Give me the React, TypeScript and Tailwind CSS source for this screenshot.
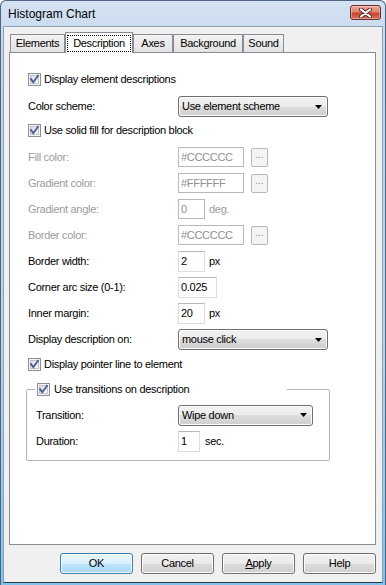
import React from "react";

const FONT = { fontFamily: '"Liberation Sans", Arial, sans-serif' };

function Check() {
  return (
    <span className="relative inline-flex h-[13px] w-[13px] shrink-0 items-center justify-center border border-[#8e8f8f] bg-[#f6f6f6]">
      <span className="absolute inset-[1px] border border-[#bfc4cb] bg-gradient-to-br from-[#d9dce1] to-[#fbfbfc]" />
      <svg className="relative" width="11" height="11" viewBox="0 0 11 11">
        <path d="M2 5.2 L4.3 8.2 L9 1.8" stroke="#4a5f97" strokeWidth="1.9" fill="none" strokeLinecap="square" />
      </svg>
    </span>
  );
}

function Arrow() {
  return (
    <svg width="7" height="4" viewBox="0 0 7 4" className="shrink-0">
      <path d="M0 0H7L3.5 4Z" fill="#000" />
    </svg>
  );
}

function Select({ value, cls }: { value: string; cls: string }) {
  return (
    <div
      className={`flex h-[21px] items-center rounded-[3px] border border-[#707070] bg-[linear-gradient(#f2f2f2_0%,#ebebeb_50%,#dddddd_50%,#cfcfcf_100%)] pl-[3px] pr-[5px] shadow-[inset_0_0_0_1px_#fbfbfb] ${cls}`}
    >
      <span className="flex-1 text-black">{value}</span>
      <Arrow />
    </div>
  );
}

function TextBox({ value, cls, disabled }: { value: string; cls: string; disabled?: boolean }) {
  return (
    <div
      className={`flex h-[20px] items-center bg-white pl-[2px] ${cls} ${
        disabled ? "border border-[#b9b9b9] text-[#8f8f8f]" : "border border-[#d9dde3] border-t-[#b4b7bd] text-black"
      }`}
    >
      {value}
    </div>
  );
}

function Dots() {
  return (
    <div className="ml-[7px] flex h-[19px] w-[17px] items-end justify-center rounded-[2px] border border-[#b8b8b8] bg-[#f4f4f4] pb-[3px] text-[#9a9a9a]">
      ...
    </div>
  );
}

function Label({ children, dis, w = "w-[150px]" }: { children: React.ReactNode; dis?: boolean; w?: string }) {
  return <span className={`${w} shrink-0 ${dis ? "text-[#9c9c9c]" : "text-black"}`}>{children}</span>;
}

function Btn({ children, def }: { children: React.ReactNode; def?: boolean }) {
  return (
    <div
      className={`flex h-[21px] w-[73px] items-center justify-center rounded-[3px] border ${
        def
          ? "border-[#3c7fb1] bg-[linear-gradient(#eaf6fd_0%,#d9f0fc_50%,#bee6fd_50%,#a7d9f5_100%)] shadow-[inset_0_0_0_1px_#f2fbff]"
          : "border-[#707070] bg-[linear-gradient(#f2f2f2_0%,#ebebeb_50%,#dddddd_50%,#cfcfcf_100%)] shadow-[inset_0_0_0_1px_#fbfbfb]"
      }`}
    >
      {children}
    </div>
  );
}

function Tab({ label, cls }: { label: string; cls: string }) {
  return (
    <div
      className={`flex h-[18px] items-center justify-center border-x border-t border-[#898c95] bg-[linear-gradient(#f3f3f3,#e2e2e2)] ${cls}`}
    >
      {label}
    </div>
  );
}

export default function App() {
  return (
    <div className="h-[585px] w-[386px] overflow-hidden bg-white" style={FONT}>
      <div className="flex h-[585px] flex-col rounded-t-[6px] border-x border-t border-[#4c6583] bg-[linear-gradient(#d4e2f2_0%,#c2d6ed_10%,#b9d2ec_60%,#7fc3ec_100%)] text-[11px] tracking-[-0.3px] text-black">
        {/* Title bar */}
        <div className="flex h-[25px] shrink-0 items-start justify-between pl-[7px] pr-[4px]">
          <span className="mt-[6px] text-[12px] leading-[14px] tracking-normal text-black">Histogram Chart</span>
          <div className="mt-[4px] flex h-[15px] w-[31px] items-center justify-center rounded-[3px] border border-[#6b2a2a] bg-[linear-gradient(#e9a898_0%,#dc8470_45%,#c8452f_55%,#d5705a_100%)] shadow-[inset_0_0_0_1px_rgba(255,255,255,0.35)]">
            <svg width="13" height="10" viewBox="0 0 13 10">
              <path d="M2 1.5 L11 8.5 M11 1.5 L2 8.5" stroke="#5a2a25" strokeWidth="4" strokeLinecap="round" />
              <path d="M2 1.5 L11 8.5 M11 1.5 L2 8.5" stroke="#ffffff" strokeWidth="2.2" strokeLinecap="round" />
            </svg>
          </div>
        </div>

        {/* Client */}
        <div className="mx-[2px] flex flex-1 flex-col border border-[#8aa0b8] border-b-[#2c3846] bg-[#f0f0f0] pt-[5px]">
          {/* Tabs */}
          <div className="ml-[6px] flex h-[20px] items-end">
            <Tab label="Elements" cls="w-[55px]" />
            <div className="relative z-10 -mb-[1px] flex h-[21px] w-[68px] items-start justify-center border-x border-t border-[#898c95] bg-white pt-[2px]">
              <span className="flex h-[17px] w-[64px] items-center justify-center border border-dotted border-black">Description</span>
            </div>
            <Tab label="Axes" cls="w-[40px]" />
            <Tab label="Background" cls="w-[70px]" />
            <Tab label="Sound" cls="w-[41px]" />
          </div>

          {/* Panel */}
          <div className="ml-[5px] flex h-[493px] w-[367px] flex-col border border-[#898c95] bg-white pl-[18px]">
            <div className="mt-[20px] flex h-[13px] items-center gap-[3px]">
              <Check />
              <span>Display element descriptions</span>
            </div>

            <div className="mt-[10px] flex h-[21px] items-center">
              <Label>Color scheme:</Label>
              <Select value="Use element scheme" cls="w-[150px]" />
            </div>

            <div className="mt-[7px] flex h-[13px] items-center gap-[3px]">
              <Check />
              <span>Use solid fill for description block</span>
            </div>

            <div className="mt-[10px] flex h-[20px] items-center">
              <Label dis>Fill color:</Label>
              <TextBox value="#CCCCCC" cls="w-[66px]" disabled />
              <Dots />
            </div>
            <div className="mt-[6px] flex h-[20px] items-center">
              <Label dis>Gradient color:</Label>
              <TextBox value="#FFFFFF" cls="w-[66px]" disabled />
              <Dots />
            </div>
            <div className="mt-[6px] flex h-[20px] items-center">
              <Label dis>Gradient angle:</Label>
              <TextBox value="0" cls="w-[27px]" disabled />
              <span className="ml-[4px] text-[#9c9c9c]">deg.</span>
            </div>
            <div className="mt-[6px] flex h-[20px] items-center">
              <Label dis>Border color:</Label>
              <TextBox value="#CCCCCC" cls="w-[66px]" disabled />
              <Dots />
            </div>
            <div className="mt-[6px] flex h-[21px] items-center">
              <Label>Border width:</Label>
              <TextBox value="2" cls="w-[27px] h-[21px]" />
              <span className="ml-[4px]">px</span>
            </div>
            <div className="mt-[5px] flex h-[21px] items-center">
              <Label>Corner arc size (0-1):</Label>
              <TextBox value="0.025" cls="w-[39px] h-[21px]" />
            </div>
            <div className="mt-[5px] flex h-[21px] items-center">
              <Label>Inner margin:</Label>
              <TextBox value="20" cls="w-[27px] h-[21px]" />
              <span className="ml-[4px]">px</span>
            </div>
            <div className="mt-[5px] flex h-[21px] items-center">
              <Label>Display description on:</Label>
              <Select value="mouse click" cls="w-[150px]" />
            </div>

            <div className="mt-[8px] flex h-[13px] items-center gap-[3px]">
              <Check />
              <span>Display pointer line to element</span>
            </div>

            <fieldset className="mt-[12px] ml-[-2px] w-[304px] rounded-[2px] border border-[#b4b4b4] pb-[8px] pl-[9px] pt-[9px]">
              <legend className="ml-[-1px] flex h-[13px] w-[252px] items-center gap-[4px] bg-white pl-[2px]">
                <Check />
                <span>Use transitions on description</span>
              </legend>
              <div className="flex h-[20px] items-center">
                <Label w="w-[142px]">Transition:</Label>
                <Select value="Wipe down" cls="w-[135px] h-[20px]" />
              </div>
              <div className="mt-[6px] flex h-[21px] items-center">
                <Label w="w-[142px]">Duration:</Label>
                <TextBox value="1" cls="w-[22px] h-[21px]" />
                <span className="ml-[5px]">sec.</span>
              </div>
            </fieldset>
          </div>

          {/* Buttons */}
          <div className="ml-[5px] mt-[8px] flex w-[367px] justify-end gap-[8px]">
            <Btn def>OK</Btn>
            <Btn>Cancel</Btn>
            <Btn>
              <span>
                <span className="underline">A</span>pply
              </span>
            </Btn>
            <Btn>Help</Btn>
          </div>
        </div>
        <div className="h-[2px] shrink-0" />
      </div>
    </div>
  );
}
